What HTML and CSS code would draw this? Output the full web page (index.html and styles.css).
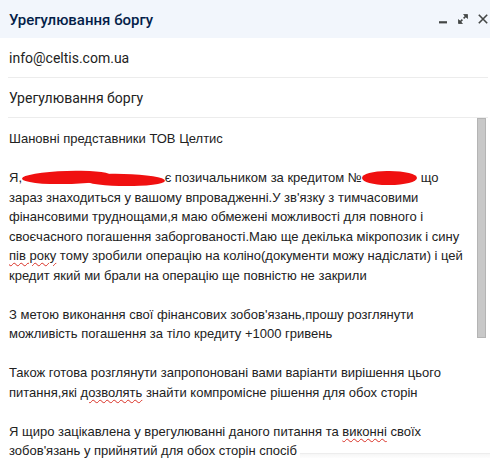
FILE: index.html
```html
<!DOCTYPE html>
<html lang="uk">
<head>
<meta charset="utf-8">
<title>Урегулювання боргу</title>
<link rel="stylesheet" href="styles.css">
</head>
<body>
<div class="compose">
  <div class="header">
    <div class="title">Урегулювання боргу</div>
    <div class="actions">
      <svg class="icon" width="10" height="10" viewBox="0 0 10 10"><rect x="1" y="7.2" width="8" height="2.2" fill="#444746"/></svg>
      <svg class="icon" width="10" height="10" viewBox="0 0 10 10"><path d="M5.6 0.5H9.5V4.4Z M0.5 5.6V9.5H4.4Z" fill="#444746" stroke="#444746" stroke-width="0.8" stroke-linejoin="round"/><path d="M8.8 1.2 5.6 4.4 M1.2 8.8 4.4 5.6" fill="none" stroke="#444746" stroke-width="1.6"/></svg>
      <svg class="icon" width="10" height="10" viewBox="0 0 10 10"><path d="M0.8 0.8l8.4 8.4M9.2 0.8l-8.4 8.4" fill="none" stroke="#444746" stroke-width="1.6"/></svg>
    </div>
  </div>
  <div class="field">info@celtis.com.ua</div>
  <div class="field">Урегулювання боргу</div>
  <div class="body-wrap">
    <div class="body">
      <p>Шановні представники ТОВ Целтис</p>
      <p>Я, <span class="redact r1"><span class="blob b1a"></span><span class="blob b1b"></span></span>є позичальником за кредитом №<span class="redact r2"><span class="blob b2"></span></span>що<br>
      зараз знаходиться у вашому впровадженні.У зв'язку з тимчасовими<br>
      фінансовими труднощами,я маю обмежені можливості для повного і<br>
      своєчасного погашення заборгованості.Маю ще декілька мікропозик і сину<br>
      <span class="sp">пів року</span> тому зробили операцію на коліно(документи можу надіслати) і цей<br>
      кредит який ми брали на операцію ще повністю не закрили</p>
      <p>З метою виконання свої фінансових зобов'язань,прошу розглянути<br>
      можливість погашення за тіло кредиту +1000 гривень</p>
      <p>Також готова розглянути запропоновані вами варіанти вирішення цього<br>
      питання,які <span class="sp">дозволять</span> знайти компромісне рішення для обох сторін</p>
      <p>Я щиро зацікавлена у врегулюванні даного питання та <span class="sp">виконні</span> своїх<br>
      зобов'язань у прийнятий для обох сторін спосіб</p>
    </div>
    <div class="scrollbar"><div class="thumb"></div></div>
    <div class="fade"></div>
  </div>
</div>
</body>
</html>
```

FILE: styles.css
```css
html, body {
  margin: 0;
  padding: 0;
  background: #ffffff;
  overflow: hidden;
}
.compose {
  width: 490px;
  height: 458px;
  display: flex;
  flex-direction: column;
  overflow: hidden;
}
.header {
  height: 38px;
  background: #f2f6fc;
  display: flex;
  align-items: center;
  justify-content: space-between;
  padding: 0 2px 0 9px;
  flex-shrink: 0;
}
.title {
  font-family: Roboto, "Noto Sans", sans-serif;
  font-weight: 500;
  font-size: 15px;
  color: #041e49;
  padding-top: 1px;
}
.actions {
  display: flex;
  gap: 10px;
  align-items: center;
}
.icon {
  display: block;
}
.field {
  height: 40px;
  margin: 0 2px 0 8px;
  padding-left: 1px;
  border-bottom: 1px solid #ececec;
  box-sizing: border-box;
  display: flex;
  align-items: center;
  font-family: Roboto, "Noto Sans", sans-serif;
  font-size: 14px;
  color: #222222;
  flex-shrink: 0;
}
.body-wrap {
  flex: 1;
  display: flex;
  overflow: hidden;
  position: relative;
}
.body {
  flex: 1;
  padding: 11px 0 0 9px;
  font-family: "Liberation Sans", Arial, sans-serif;
  font-size: 13px;
  line-height: 19.5px;
  color: #222222;
  white-space: nowrap;
}
.body p {
  margin: 0 0 19.5px 0;
}
.redact {
  display: inline-block;
  position: relative;
  height: 16px;
  vertical-align: -4px;
}
.r1 { width: 143px; margin-left: -4px; margin-right: 0; }
.r2 { width: 55px; margin-left: 0; margin-right: 4px; }
.blob {
  position: absolute;
  background: #f01010;
}
.b1a {
  left: 0;
  top: 1px;
  width: 90px;
  height: 13px;
  border-radius: 50% 40% 45% 50% / 50% 50% 50% 50%;
  transform: rotate(-1.5deg);
}
.b1b {
  left: 60px;
  top: 4px;
  width: 83px;
  height: 12px;
  border-radius: 40% 50% 50% 45% / 50% 50% 50% 50%;
  transform: rotate(1deg);
}
.b2 {
  left: 0;
  top: 1px;
  width: 55px;
  height: 14px;
  border-radius: 45% 50% 50% 45% / 50% 50% 50% 50%;
}
.sp {
  text-decoration: underline wavy #d93025;
  text-decoration-thickness: 1px;
  text-underline-offset: 2px;
}
.scrollbar {
  width: 9px;
  margin-right: 4px;
  flex-shrink: 0;
}
.thumb {
  height: 220px;
  background: #c8c8c8;
  border: 1px solid #b4b4b4;
  box-sizing: border-box;
}
.fade {
  position: absolute;
  left: 300px;
  right: 0;
  top: 335px;
  height: 5px;
  border-top: 1px solid #ededed;
  background: linear-gradient(#f6f6f6, #ffffff);
}
```
